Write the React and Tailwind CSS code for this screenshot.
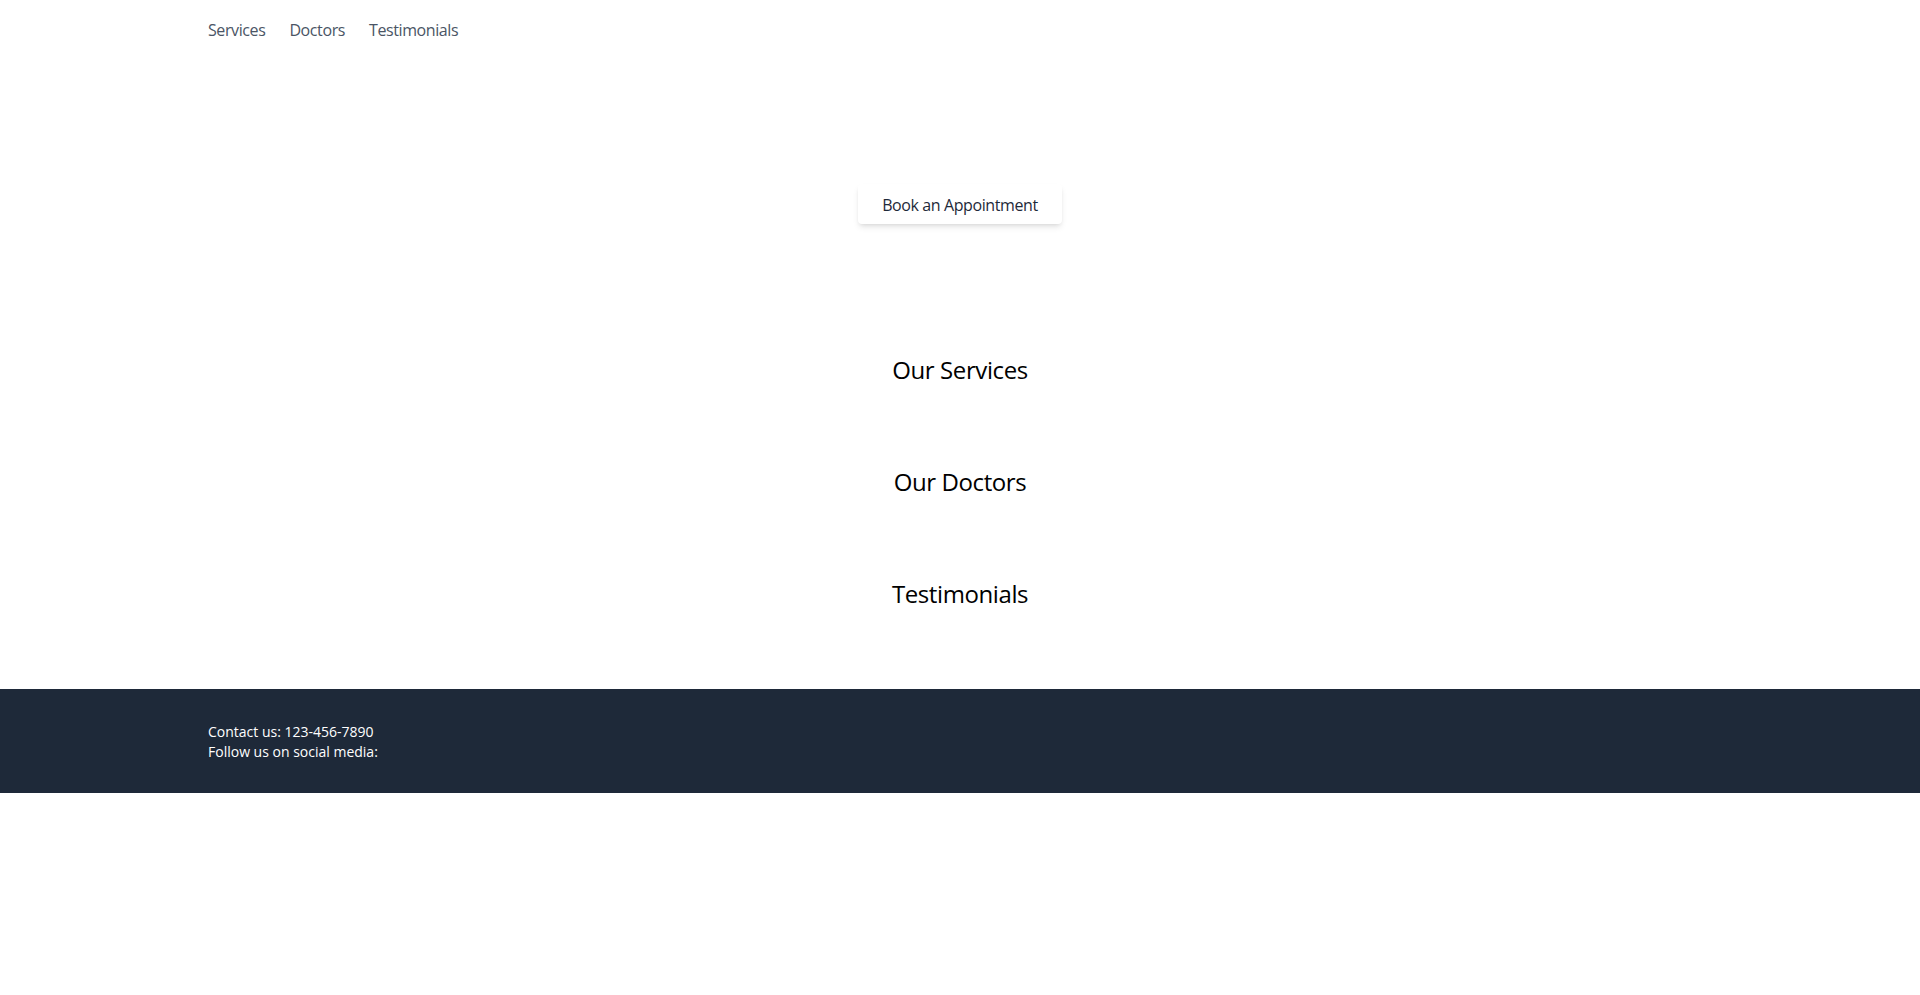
export default function App() {
  const links = ['Services', 'Doctors', 'Testimonials']
  const sections = ['Our Services', 'Our Doctors', 'Testimonials']

  return (
    <div className="min-h-screen bg-white tracking-tight" style={{ fontFamily: '"Open Sans", "Noto Sans", sans-serif' }}>
      {/* Nav */}
      <nav className="bg-white">
        <div className="container mx-auto px-4 pt-[18px] pb-[14px] flex items-center gap-6 text-base leading-6 text-gray-600">
          {links.map(l => (
            <a key={l} href="#" className="hover:text-gray-900">{l}</a>
          ))}
        </div>
      </nav>

      {/* Hero */}
      <header className="pt-32 pb-[90px] text-center">
        <button className="bg-white text-gray-800 text-base leading-6 px-6 pt-[9px] pb-[7px] rounded shadow-md">
          Book an Appointment
        </button>
      </header>

      <main className="pb-[39px]">
        {sections.map(s => (
          <section key={s} className="py-10">
            <div className="container mx-auto px-4 text-center">
              <h2 className="text-2xl leading-8 text-black">{s}</h2>
            </div>
          </section>
        ))}
      </main>

      {/* Footer */}
      <footer className="bg-gray-800 text-white pt-[33px] pb-[31px]">
        <div className="container mx-auto px-4 text-sm leading-5 tracking-normal">
          <p>Contact us: 123-456-7890</p>
          <p>Follow us on social media:</p>
        </div>
      </footer>
    </div>
  )
}
